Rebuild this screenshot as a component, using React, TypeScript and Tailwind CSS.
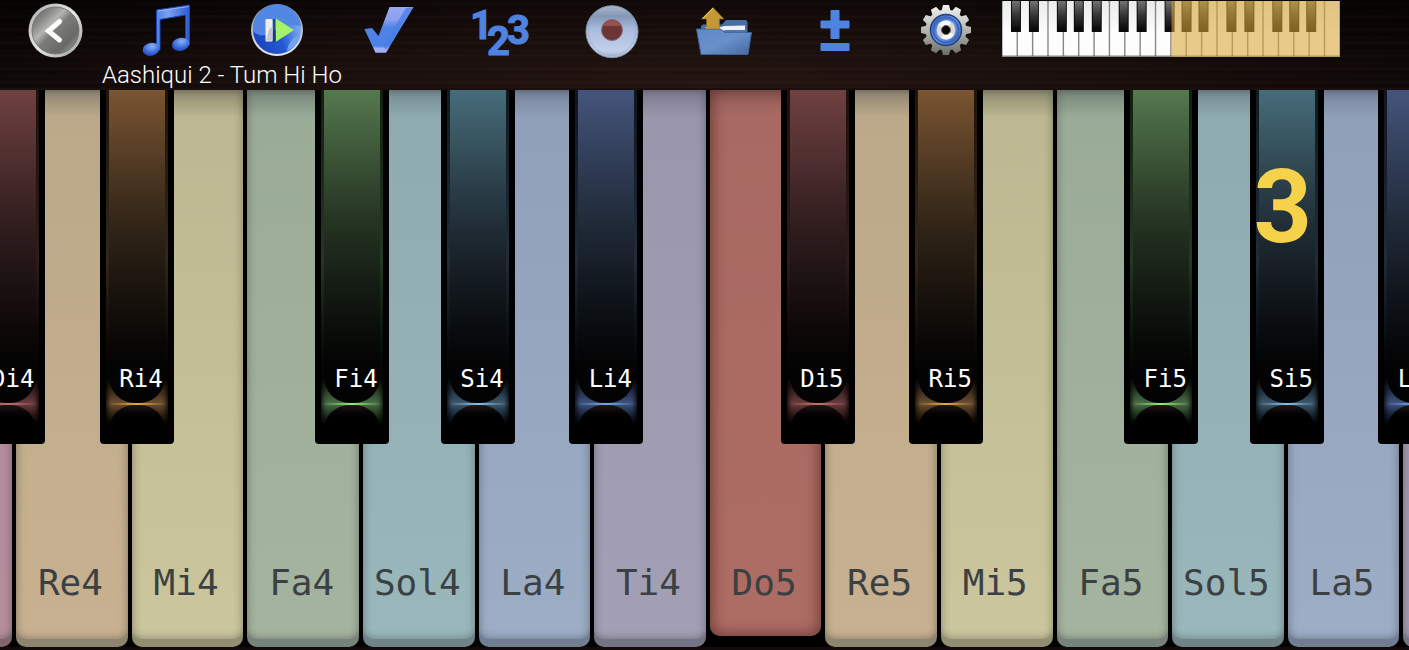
import React from 'react';

type SharpKey = {
  name: string;
  left: string;
  face: string;
  side: string;
  glow: string;
  line: string;
};

type Note = {
  name: string;
  face: string;
  lip: string;
  sharp?: SharpKey;
};

const sharps = {
  di: {
    name: 'Di',
    left: 'left-[63%]',
    face: 'from-[#704141] via-[#2f1c1d]',
    side: 'from-[#1f1010] via-[#2e1b1b]',
    glow: 'via-[#6b3d3f]',
    line: 'via-[#c9716c]',
  },
  ri: {
    name: 'Ri',
    left: 'left-[74%]',
    face: 'from-[#7a5531] via-[#2f2317]',
    side: 'from-[#20150b] via-[#33261a]',
    glow: 'via-[#6d5032]',
    line: 'via-[#e5a93f]',
  },
  fi: {
    name: 'Fi',
    left: 'left-[60%]',
    face: 'from-[#55784e] via-[#223020]',
    side: 'from-[#122010] via-[#253824]',
    glow: 'via-[#4b7048]',
    line: 'via-[#93ee72]',
  },
  si: {
    name: 'Si',
    left: 'left-[69%]',
    face: 'from-[#466d7a] via-[#1f2b34]',
    side: 'from-[#101a20] via-[#202c39]',
    glow: 'via-[#3e5a70]',
    line: 'via-[#8cc0ea]',
  },
  li: {
    name: 'Li',
    left: 'left-[80%]',
    face: 'from-[#45547c] via-[#1e2835]',
    side: 'from-[#10151f] via-[#202c3c]',
    glow: 'via-[#3e5480]',
    line: 'via-[#7ba6f0]',
  },
};

const scale: Note[] = [
  { name: 'Do', face: 'from-[#a07f8c] via-[#b08998] to-[#b68e9d]', lip: 'bg-[#806570]', sharp: sharps.di },
  { name: 'Re', face: 'from-[#8f8672] via-[#bba98a] to-[#c8b190]', lip: 'bg-[#8f846f]', sharp: sharps.ri },
  { name: 'Mi', face: 'from-[#8e8b70] via-[#bdb891] to-[#ccc69e]', lip: 'bg-[#918e72]' },
  { name: 'Fa', face: 'from-[#78877a] via-[#9aab98] to-[#a5b49f]', lip: 'bg-[#76827a]', sharp: sharps.fi },
  { name: 'Sol', face: 'from-[#758c93] via-[#8eabaf] to-[#9ab8bc]', lip: 'bg-[#6f8389]', sharp: sharps.si },
  { name: 'La', face: 'from-[#76839a] via-[#90a0b9] to-[#9dadc6]', lip: 'bg-[#707d92]', sharp: sharps.li },
  { name: 'Ti', face: 'from-[#7d7b90] via-[#9a96ad] to-[#a3a0b6]', lip: 'bg-[#757386]' },
];

const keys = [4, 5].flatMap((octave) => scale.map((note) => ({ ...note, octave })));

const BackIcon = () => (
  <svg className="h-[62px] w-14" viewBox="0 0 56 62" aria-hidden="true">
    <defs>
      <linearGradient id="backRing" x1="0" y1="0" x2="1" y2="1">
        <stop offset="0" stopColor="#aaaaaa" />
        <stop offset="0.5" stopColor="#e6e6e6" />
        <stop offset="1" stopColor="#9c9c9c" />
      </linearGradient>
      <linearGradient id="backFace" x1="0" y1="0" x2="1" y2="1">
        <stop offset="0" stopColor="#5c5c5a" />
        <stop offset="0.22" stopColor="#848482" />
        <stop offset="0.38" stopColor="#b4b4b2" />
        <stop offset="0.5" stopColor="#7b7b79" />
        <stop offset="0.75" stopColor="#686866" />
        <stop offset="1" stopColor="#b2b2b0" />
      </linearGradient>
    </defs>
    <circle cx="27.5" cy="30.5" r="27" fill="url(#backRing)" />
    <circle cx="27.5" cy="30.5" r="23.5" fill="url(#backFace)" stroke="#777" strokeWidth="1" />
    <path d="M31.5 21.5L20.5 31L31.5 40" fill="none" stroke="#fff" strokeWidth="5" strokeLinecap="round" strokeLinejoin="miter" />
  </svg>
);

const MusicIcon = () => (
  <svg className="h-[62px] w-14" viewBox="0 0 56 62" aria-hidden="true">
    <defs>
      <linearGradient id="beam" x1="0" y1="0" x2="1" y2="0">
        <stop offset="0" stopColor="#4d83e4" />
        <stop offset="0.35" stopColor="#7d9ff0" />
        <stop offset="1" stopColor="#2a5bd6" />
      </linearGradient>
      <radialGradient id="head" cx="0.6" cy="0.3" r="0.7">
        <stop offset="0" stopColor="#8fb0fa" />
        <stop offset="0.55" stopColor="#4878e2" />
        <stop offset="1" stopColor="#1f49bd" />
      </radialGradient>
    </defs>
    <path d="M17.5 10L50.5 5V45H46.5V15L21 19.5V50H17.5Z" fill="url(#beam)" stroke="#1c46b4" strokeWidth="1" />
    <path d="M19 11L49.5 6.5" stroke="#8fb8f5" strokeWidth="1" />
    <ellipse cx="12" cy="49.3" rx="8.5" ry="6.5" fill="url(#head)" transform="rotate(-12 12 49.3)" />
    <ellipse cx="41.6" cy="44.3" rx="8.8" ry="6.5" fill="url(#head)" transform="rotate(-12 41.6 44.3)" />
  </svg>
);

const PlayIcon = () => (
  <svg className="h-[62px] w-14" viewBox="0 0 56 62" aria-hidden="true">
    <defs>
      <linearGradient id="playRing" x1="0" y1="0" x2="0" y2="1">
        <stop offset="0" stopColor="#777c85" />
        <stop offset="0.6" stopColor="#c9ccd2" />
        <stop offset="1" stopColor="#e8e8e8" />
      </linearGradient>
      <linearGradient id="playBall" x1="0" y1="1" x2="1" y2="0.6">
        <stop offset="0" stopColor="#1640b8" />
        <stop offset="0.6" stopColor="#2458d2" />
        <stop offset="1" stopColor="#76a5ef" />
      </linearGradient>
    </defs>
    <circle cx="27" cy="30" r="26" fill="url(#playRing)" />
    <circle cx="27" cy="30" r="24" fill="url(#playBall)" />
    <path d="M3 31A24 24 0 0 1 51 26C40 25 34 24 25 30C18 36 9 38 3 31Z" fill="#5288e4" />
    <path d="M37 51C38 43 43 37 50.5 34A24 24 0 0 1 37 51Z" fill="#72a4ee" />
    <rect x="15.5" y="19" width="7" height="22.5" rx="1" fill="#ededed" />
    <path d="M19 30L22.5 26V40.5H16Z" fill="#c6c6ca" />
    <path d="M24 19V42" stroke="#16306f" strokeWidth="1.5" />
    <path d="M26 18.5L44 30L26 41.7Z" fill="#a5f36b" />
  </svg>
);

const CheckIcon = () => (
  <svg className="h-[62px] w-14" viewBox="0 0 56 62" aria-hidden="true">
    <defs>
      <linearGradient id="tick" x1="0" y1="0" x2="0" y2="1">
        <stop offset="0" stopColor="#9aa8f3" />
        <stop offset="0.28" stopColor="#8aa0f0" />
        <stop offset="0.45" stopColor="#4f83e6" />
        <stop offset="0.86" stopColor="#4c82e8" />
        <stop offset="0.9" stopColor="#a3aef4" />
      </linearGradient>
    </defs>
    <path d="M2.4 29L10 28L16.500 36L27.500 7H51.500L24 52.700H13.500Z" fill="url(#tick)" />
    <path d="M51.5 7L24 50L21 46L44 8Z" fill="#4a80e6" opacity="0.8" />
  </svg>
);

const NumbersIcon = () => (
  <svg className="h-[62px] w-14 overflow-visible" viewBox="0 0 56 62" aria-hidden="true">
    <g className="fill-[#4f83e2] stroke-[#4f83e2] font-['Roboto',sans-serif] text-[40px] font-bold">
      <text x="-3" y="39">1</text>
      <text x="14" y="55">2</text>
      <text x="34" y="44">3</text>
    </g>
  </svg>
);

const RecordIcon = () => (
  <svg className="h-[62px] w-14" viewBox="0 0 56 62" aria-hidden="true">
    <defs>
      <linearGradient id="disc" x1="0" y1="0" x2="0" y2="1">
        <stop offset="0" stopColor="#aab9cc" />
        <stop offset="0.2" stopColor="#8397b5" />
        <stop offset="0.45" stopColor="#a9bbdc" />
        <stop offset="0.85" stopColor="#c2cfea" />
        <stop offset="1" stopColor="#a9b8cf" />
      </linearGradient>
    </defs>
    <circle cx="28" cy="31.7" r="26" fill="url(#disc)" stroke="#8195a9" strokeWidth="1" />
    <circle cx="28" cy="31.7" r="23.5" fill="none" stroke="#8fa3c4" strokeWidth="1" opacity="0.6" />
    <circle cx="28" cy="30" r="10.5" fill="#6b3535" stroke="#8d6a76" strokeWidth="1" />
    <path d="M19 26a10 10 0 0 1 18 0z" fill="#95514c" />
  </svg>
);

const FolderIcon = () => (
  <svg className="h-[62px] w-14" viewBox="0 0 56 62" aria-hidden="true">
    <defs>
      <linearGradient id="folder" x1="0" y1="0" x2="1" y2="1">
        <stop offset="0" stopColor="#5d8ac8" />
        <stop offset="0.5" stopColor="#6a90cb" />
        <stop offset="1" stopColor="#44699f" />
      </linearGradient>
      <linearGradient id="upload" x1="0" y1="0" x2="1" y2="0">
        <stop offset="0" stopColor="#c99a33" />
        <stop offset="1" stopColor="#c0953b" />
      </linearGradient>
    </defs>
    <path d="M5 26L7 24.5H26L30 20H50L51.5 22V35H5Z" fill="#456ea5" />
    <path d="M9 27L25 27L28 26L49 25.5V30L12 31Z" fill="#eef2f8" />
    <path d="M0.5 29H24.5L29 32.5H55.5L52 54.5H5Z" fill="url(#folder)" stroke="#3c6299" strokeWidth="1" />
    <path d="M28.5 30H50.5V32.5H30Z" fill="#4d76b0" />
    <path d="M17 7.5L28 19H23.5V29H10.5V19H5.5Z" fill="url(#upload)" stroke="#8b6c22" strokeWidth="0.5" />
    <path d="M17 8L6.5 18.5" stroke="#efd264" strokeWidth="1" />
  </svg>
);

const PlusMinusIcon = () => (
  <svg className="h-[62px] w-14" viewBox="0 0 56 62" aria-hidden="true">
    <g fill="#4f83e2">
      <rect x="23.5" y="10" width="9" height="29" rx="1" />
      <rect x="13.5" y="20.5" width="29" height="8" rx="1" />
      <rect x="13.5" y="43" width="29" height="8" rx="1" />
    </g>
  </svg>
);

const teeth = [0, 30, 60, 90, 120, 150, 180, 210, 240, 270, 300, 330];

const GearIcon = () => (
  <svg className="h-[62px] w-14" viewBox="0 0 56 62" aria-hidden="true">
    <defs>
      <linearGradient id="gear" gradientUnits="userSpaceOnUse" x1="0" y1="5" x2="0" y2="55">
        <stop offset="0" stopColor="#f2f2f0" />
        <stop offset="0.5" stopColor="#b5b5b1" />
        <stop offset="1" stopColor="#6c6e69" />
      </linearGradient>
      <linearGradient id="ring" x1="0" y1="0" x2="1" y2="1">
        <stop offset="0" stopColor="#2c59a8" />
        <stop offset="0.5" stopColor="#6d98e4" />
        <stop offset="1" stopColor="#2f5db5" />
      </linearGradient>
      {teeth.map((angle) => (
        <path key={angle} id={`tooth${angle}`} d="M25 5H31L33 13H23Z" transform={`rotate(${angle} 28 30)`} />
      ))}
    </defs>
    <g fill="url(#gear)">
      <circle cx="28" cy="30" r="20.5" />
      <mask id="gearMask">
        {teeth.map((angle) => (
          <use key={angle} href={`#tooth${angle}`} fill="#fff" />
        ))}
      </mask>
      <rect x="0" y="2" width="56" height="56" mask="url(#gearMask)" />
    </g>
    <circle cx="28" cy="30" r="15.5" fill="url(#ring)" stroke="#233f76" strokeWidth="1.5" />
    <circle cx="28" cy="30" r="12.5" fill="none" stroke="#3867c4" strokeWidth="2" />
    <circle cx="28" cy="30" r="9.5" fill="#d8d8d6" />
    <path d="M28 30L20 25A9.5 9.5 0 0 1 33 22ZM28 30L36 35A9.5 9.5 0 0 1 23 38Z" fill="#f8f8f8" />
    <circle cx="28" cy="30" r="4.5" fill="#0c0909" stroke="#666" strokeWidth="1" />
  </svg>
);

const tools = [
  { label: 'Back', Icon: BackIcon },
  { label: 'Songs', Icon: MusicIcon },
  { label: 'Play', Icon: PlayIcon },
  { label: 'Check', Icon: CheckIcon },
  { label: 'Note numbers', Icon: NumbersIcon },
  { label: 'Record', Icon: RecordIcon },
  { label: 'Open', Icon: FolderIcon },
  { label: 'Zoom', Icon: PlusMinusIcon },
  { label: 'Settings', Icon: GearIcon },
];

const miniSharps = [9, 27, 55, 72, 90, 117, 135, 163, 180, 197, 225, 243, 271, 288, 305];

const MiniKeyboard = () => (
  <svg className="h-14 w-full" viewBox="0 0 339 56" preserveAspectRatio="none" aria-hidden="true">
    <defs>
      <linearGradient id="miniWhite" x1="0" y1="0" x2="0" y2="1">
        <stop offset="0" stopColor="#ebebeb" />
        <stop offset="0.6" stopColor="#fdfdfd" />
      </linearGradient>
      <linearGradient id="miniBlack" x1="0" y1="0" x2="0" y2="1">
        <stop offset="0" stopColor="#727472" />
        <stop offset="0.5" stopColor="#343736" />
        <stop offset="1" stopColor="#0a0a0a" />
      </linearGradient>
    </defs>
    <rect width="339" height="56" fill="#858985" />
    {Array.from({ length: 22 }, (_, i) => (
      <rect key={i} x={i * 15.4 + 0.6} y="0" width="14" height="54.5" rx="1" fill="url(#miniWhite)" />
    ))}
    {miniSharps.map((x) => (
      <g key={x}>
        <rect x={x} y="0" width="10" height="31" fill="#0a0b0a" />
        <rect x={x + 1} y="0" width="8" height="28" fill="url(#miniBlack)" />
      </g>
    ))}
    <rect x="170" width="169" height="56" fill="#d9a637" opacity="0.576" />
  </svg>
);

const BlackKey = ({ sharp, octave }: { sharp: SharpKey; octave: number }) => (
  <button
    type="button"
    className={`absolute top-0 z-10 flex h-[63.6%] w-[64%] flex-col rounded-b-[4px] bg-black px-[6px] pb-[14px] ${sharp.left}`}
  >
    <span className={`flex w-full flex-1 flex-col bg-linear-to-b to-black px-[3px] ${sharp.side}`}>
      <span
        className={`relative z-10 flex w-full flex-1 flex-col items-end justify-end rounded-b-[26px] bg-linear-to-b via-45% to-[#030303] to-90% pr-[2px] pb-[10px] ${sharp.face}`}
      >
        {sharp.name === 'Si' && octave === 5 && (
          <span className="absolute inset-x-0 top-[56px] flex justify-center pr-[8px] font-['Roboto',sans-serif] text-[102px] leading-[122px] font-bold text-[#f6d24b]">
            3
          </span>
        )}
        <span className="font-['DejaVu_Sans_Mono',monospace] text-2xl leading-7 text-white">
          {sharp.name}
          {octave}
        </span>
      </span>
      <span
        className={`-mx-[3px] -mt-[26px] flex h-[53px] flex-col bg-linear-to-b from-transparent via-50% to-black px-[3px] pt-[26px] shadow-[inset_5px_0_4px_-3px_rgba(0,0,0,0.8),inset_-5px_0_4px_-3px_rgba(0,0,0,0.8)] ${sharp.glow}`}
      >
        <span className={`h-[2px] w-full bg-linear-to-r from-transparent to-transparent ${sharp.line}`} />
        <span className="w-full flex-1 rounded-t-[26px] bg-linear-to-b from-[#1c1816] to-black to-70%" />
      </span>
    </span>
  </button>
);

const WhiteKey = ({ note, octave }: { note: Note; octave: number }) => {
  const pressed = note.name === 'Do' && octave === 5;

  return (
    <button
      type="button"
      aria-pressed={pressed}
      className={`flex w-full rounded-b-[10px] ${pressed ? 'bg-black pb-[11px]' : `pb-[8px] ${note.lip}`}`}
    >
      <span
        className={`flex h-full w-full items-end justify-center rounded-b-[10px] bg-linear-to-b pr-[3px] ${
          pressed
            ? 'from-[#96605a] via-[#a86962] via-5% to-[#ad6d65] pb-[33px] shadow-[inset_0_0_14px_2px_rgba(60,20,20,0.55)]'
            : `via-5% pb-[36px] shadow-[inset_0_0_8px_rgba(40,40,40,0.45)] ${note.face}`
        }`}
      >
        <span className="font-['DejaVu_Sans_Mono',monospace] text-4xl leading-10 text-[#3b4042]">
          {note.name}
          {octave}
        </span>
      </span>
    </button>
  );
};

const App = () => {
  return (
    <div className="flex h-screen min-h-[480px] flex-col overflow-hidden bg-[#120b0a]">
      <header className="h-[90px] shrink-0 border-b-2 border-[#1a0f0d] bg-[repeating-linear-gradient(180deg,rgba(0,0,0,0.2)_0px,rgba(70,40,32,0.1)_4px,rgba(0,0,0,0.15)_7px,rgba(60,34,28,0.08)_13px),radial-gradient(ellipse_at_50%_100%,#281713_0%,#190f0d_45%,#020101_100%)]">
        <div className="flex">
          <nav className="grid w-[71.1%] grid-cols-9">
            {tools.map(({ label, Icon }) => (
              <button key={label} type="button" aria-label={label} className="flex justify-center">
                <Icon />
              </button>
            ))}
          </nav>
          <div className="w-[24%] pt-px">
            <MiniKeyboard />
          </div>
        </div>
        <h1 className="pl-[102px] font-['Roboto',sans-serif] text-2xl leading-[26px] font-light text-white">
          Aashiqui 2 - Tum Hi Ho
        </h1>
      </header>

      <main className="flex flex-1 overflow-hidden pb-[3px]">
        <div className="-ml-[7.2%] grid w-[114.86%] shrink-0 grid-cols-14 bg-black">
          {keys.map((note) => (
            <div key={note.name + note.octave} className="relative flex px-[2px]">
              <WhiteKey note={note} octave={note.octave} />
              {note.sharp && <BlackKey sharp={note.sharp} octave={note.octave} />}
            </div>
          ))}
        </div>
      </main>
    </div>
  );
};

export default App;
